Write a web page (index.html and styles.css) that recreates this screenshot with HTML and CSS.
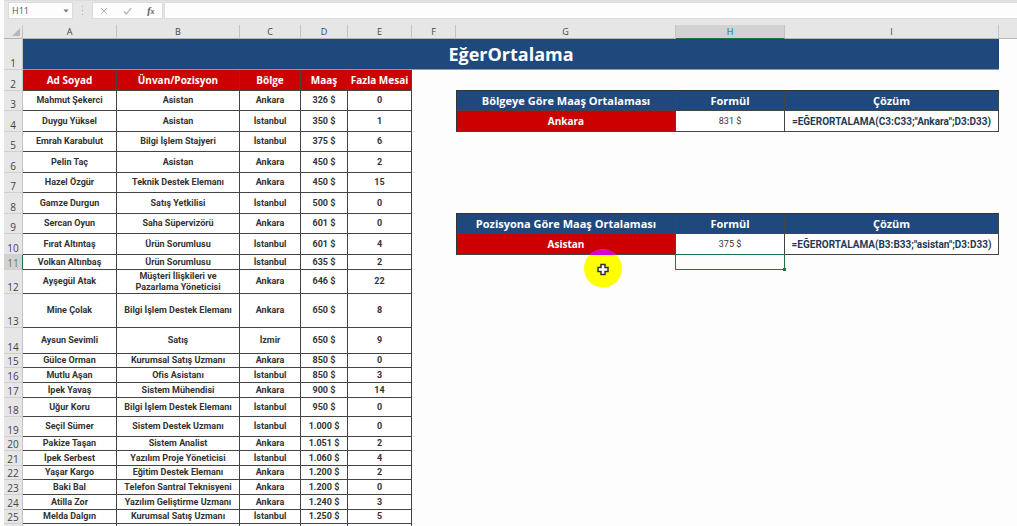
FILE: index.html
```html
<!DOCTYPE html>
<html lang="tr">
<head>
<meta charset="utf-8">
<title>EğerOrtalama</title>
<link rel="stylesheet" href="styles.css">
</head>
<body>
<div class="app">
  <div class="bar">
    <div class="namebox">
      <input class="name" type="text" value="H11" aria-label="Ad kutusu">
      <button class="drop" aria-label="Hücre listesi"><svg width="6" height="4" viewBox="0 0 6 4"><path d="M0.5 0.5h5L3 3.5z" fill="#777"/></svg></button>
    </div>
    <svg class="dots" width="3" height="10" viewBox="0 0 3 10"><path d="M1 0h1v1H1zM1 4h1v1H1zM1 8h1v1H1z" fill="#aaa"/></svg>
    <div class="tools">
      <button aria-label="İptal"><svg width="8" height="8" viewBox="0 0 8 8"><path d="M1 1l6 6M7 1L1 7" stroke="#b5b5b5" fill="none"/></svg></button>
      <button aria-label="Gir"><svg width="9" height="8" viewBox="0 0 9 8"><path d="M1 4.5L3.3 7L8.2 1" stroke="#b5b5b5" stroke-width="1.2" fill="none"/></svg></button>
      <button class="fx" aria-label="İşlev ekle">f<small>x</small></button>
    </div>
    <input class="formula" type="text" aria-label="Formül çubuğu">
  </div>
  <table class="sheet">
    <colgroup><col class="w-n"><col class="w-a"><col class="w-b"><col class="w-c"><col class="w-d"><col class="w-e"><col class="w-f"><col class="w-g"><col class="w-h"><col class="w-i"><col></colgroup>
    <thead>
      <tr class="letters"><th class="corner"><svg width="8" height="8" viewBox="0 0 8 8"><path d="M8 0v8H0z" fill="#b8b8b8"/></svg></th><th>A</th><th>B</th><th>C</th><th>D</th><th>E</th><th>F</th><th>G</th><th class="on">H</th><th>I</th><th class="rest"></th></tr>
    </thead>
    <tbody id="rows"></tbody>
  </table>
</div>
<script src="sheet.js"></script>
</body>
</html>
```
FILE: styles.css
```css
* { box-sizing: border-box; }
body {
  margin: 0;
  background: #fdfdfd;
  font-family: "Liberation Sans", Arial, sans-serif;
  color: #333;
}
.app {
  height: 100vh;
  overflow: hidden;
  padding-left: 4px;
}
.bar {
  display: flex;
  height: 25px;
  padding: 1px 0 6px 4px;
  background: #e6e6e6;
  border-top: 1px solid #ddd;
}
.namebox, .tools {
  display: flex;
  align-items: center;
  background: #fdfdfd;
  border: 1px solid #dcdcdc;
}
.namebox { width: 65px; }
.name {
  flex: 1;
  min-width: 0;
  padding: 0 0 0 3px;
  border: 0;
  background: none;
  font: 9px "Open Sans", sans-serif;
  color: #555;
}
button {
  display: flex;
  align-items: center;
  justify-content: center;
  padding: 0;
  border: 0;
  background: none;
}
.drop { width: 13px; }
.dots { margin: 4px 8px; }
.tools {
  width: 71px;
  justify-content: space-around;
}
.fx {
  font: italic bold 10px "Liberation Serif", serif;
  color: #555;
}
.fx small { font-size: 8px; padding-top: 2px; }
.formula {
  flex: 1;
  min-width: 0;
  margin-left: 1px;
  border: 1px solid #dcdcdc;
  border-right: 0;
  background: #fdfdfd;
}
.sheet {
  width: 100%;
  table-layout: fixed;
  border-collapse: separate;
  border-spacing: 0;
  font: bold 9px/11px Roboto, sans-serif;
  text-align: center;
}
.w-n { width: 19px; }
.w-a { width: 94px; }
.w-b { width: 123px; }
.w-c { width: 61px; }
.w-d { width: 47px; }
.w-e { width: 64px; }
.w-f { width: 44px; }
.w-g { width: 220px; }
.w-h { width: 109px; }
.w-i { width: 214px; }
th, td { padding: 0; }
.letters th {
  height: 14px;
  background: #e6e6e6;
  border-right: 1px solid #c4c4c4;
  border-bottom: 1px solid #b5b5b5;
  font: 9px/12px "Open Sans", sans-serif;
  color: #444;
}
.letters .corner { text-align: right; padding-right: 2px; }
.corner svg { display: block; margin-left: auto; }
.letters .on {
  background: #d2d2d2;
  border-bottom-color: #217346;
  color: #217346;
}
.letters .rest { border-right: 0; }
.num {
  background: #e6e6e6;
  border-right: 1px solid #c4c4c4;
  border-bottom: 1px solid #cfcfcf;
  font: 10px/12px "Open Sans", sans-serif;
  color: #444;
  vertical-align: bottom;
}
.num.on {
  background: #d2d2d2;
  border-right-color: #217346;
  color: #5d7d6c;
}
.cell {
  background: #fff;
  border-right: 1px solid #444;
  border-bottom: 1px solid #444;
}
.title {
  background: #1f497d;
  border-bottom: 1px solid #8a9ab0;
  color: #fff;
  font: bold 18px/28px "Open Sans", sans-serif;
}
.red {
  background: #c00;
  color: #fff;
  font: bold 10px/14px "Open Sans", sans-serif;
}
.blue {
  background: #1f497d;
  color: #fff;
  font: bold 11px/16px "Open Sans", sans-serif;
}
.first { border-left: 1px solid #333; }
.over { border-bottom: 1px solid #333; }
.value { font-weight: normal; }
.solution {
  font-size: 10px;
  color: #243a52;
  white-space: nowrap;
}
.picked { position: relative; }
.picked::before {
  content: "";
  position: absolute;
  inset: -1px 0 0 -1px;
  border: 1px solid #217346;
}
.picked::after {
  content: "";
  position: absolute;
  right: -1px;
  bottom: -1px;
  width: 3px;
  height: 3px;
  background: #217346;
}
.host { position: relative; }
.pointer {
  position: absolute;
  left: 128px;
  top: -6px;
  z-index: 2;
}
.h14 { height: 14px; }
.h15 { height: 15px; }
.h19 { height: 19px; }
.h20 { height: 20px; }
.h21 { height: 21px; }
.h24 { height: 24px; }
.h26 { height: 26px; }
.h31 { height: 31px; }
.h34 { height: 34px; }
```
FILE: sheet.js
```js
const people = [
  [20, "Mahmut Şekerci", "Asistan", "Ankara", "326 $", "0"],
  [21, "Duygu Yüksel", "Asistan", "İstanbul", "350 $", "1"],
  [20, "Emrah Karabulut", "Bilgi İşlem Stajyeri", "İstanbul", "375 $", "6"],
  [21, "Pelin Taç", "Asistan", "Ankara", "450 $", "2"],
  [20, "Hazel Özgür", "Teknik Destek Elemanı", "Ankara", "450 $", "15"],
  [21, "Gamze Durgun", "Satış Yetkilisi", "İstanbul", "500 $", "0"],
  [20, "Sercan Oyun", "Saha Süpervizörü", "Ankara", "601 $", "0"],
  [21, "Fırat Altıntaş", "Ürün Sorumlusu", "İstanbul", "601 $", "4"],
  [15, "Volkan Altınbaş", "Ürün Sorumlusu", "İstanbul", "635 $", "2"],
  [24, "Ayşegül Atak", "Müşteri İlişkileri ve<br>Pazarlama Yöneticisi", "Ankara", "646 $", "22"],
  [34, "Mine Çolak", "Bilgi İşlem Destek Elemanı", "Ankara", "650 $", "8"],
  [26, "Aysun Sevimli", "Satış", "İzmir", "650 $", "9"],
  [14, "Gülce Orman", "Kurumsal Satış Uzmanı", "Ankara", "850 $", "0"],
  [15, "Mutlu Aşan", "Ofis Asistanı", "İstanbul", "850 $", "3"],
  [15, "İpek Yavaş", "Sistem Mühendisi", "Ankara", "900 $", "14"],
  [19, "Uğur Koru", "Bilgi İşlem Destek Elemanı", "İstanbul", "950 $", "0"],
  [20, "Seçil Sümer", "Sistem Destek Uzmanı", "İstanbul", "1.000 $", "0"],
  [14, "Pakize Taşan", "Sistem Analist", "Ankara", "1.051 $", "2"],
  [15, "İpek Serbest", "Yazılım Proje Yöneticisi", "İstanbul", "1.060 $", "4"],
  [14, "Yaşar Kargo", "Eğitim Destek Elemanı", "Ankara", "1.200 $", "2"],
  [15, "Baki Bal", "Telefon Santral Teknisyeni", "Ankara", "1.200 $", "0"],
  [15, "Atilla Zor", "Yazılım Geliştirme Uzmanı", "Ankara", "1.240 $", "3"],
  [14, "Melda Dalgın", "Kurumsal Satış Uzmanı", "İstanbul", "1.250 $", "5"],
  [15, "", "", "İstanbul", "", ""]
];

const heading = name => `<td></td><td class="cell blue first">${name}</td><td class="cell blue">Formül</td><td class="cell blue">Çözüm</td><td></td>`;
const answer = (key, value, formula) => `<td></td><td class="cell red first">${key}</td><td class="cell value">${value}</td><td class="cell solution">${formula}</td><td></td>`;
const pointer = `<svg class="pointer" width="38" height="39" viewBox="0 0 38 39"><circle cx="19" cy="19.500" r="19" fill="#ff0"/><path d="M5.500 6A19 19 0 0 1 32.500 6z" fill="#d400d4"/><path d="M17 15.500h4v3h3v4h-3v3h-4v-3h-3v-4h3z" fill="#fff" stroke="#333" stroke-width="1.500"/></svg>`;

const right = {
  3: heading("Bölgeye Göre Maaş Ortalaması"),
  4: answer("Ankara", "831 $", '=EĞERORTALAMA(C3:C33;"Ankara";D3:D33)'),
  9: heading("Pozisyona Göre Maaş Ortalaması"),
  10: answer("Asistan", "375 $", '=EĞERORTALAMA(B3:B33;"asistan";D3:D33)'),
  11: `<td></td><td class="host">${pointer}</td><td class="picked"></td><td></td><td></td>`
};
const edge = '<td></td><td class="over"></td><td class="over"></td><td class="over"></td><td></td>';
right[8] = edge;

let html = '<tr class="h31"><td class="num">1</td><td class="title" colspan="9">EğerOrtalama</td><td></td></tr>';
html += '<tr class="h21"><td class="num">2</td>' +
  ["Ad Soyad", "Ünvan/Pozisyon", "Bölge", "Maaş", "Fazla Mesai"].map(t => `<td class="cell red">${t}</td>`).join("") + edge + "</tr>";
people.forEach(([height, ...cells], i) => {
  const n = i + 3;
  html += `<tr class="h${height}"><td class="num${n === 11 ? " on" : ""}">${n}</td>` +
    cells.map(t => `<td class="cell">${t}</td>`).join("") +
    (right[n] || "<td></td><td></td><td></td><td></td><td></td>") + "</tr>";
});
document.getElementById("rows").innerHTML = html;
```
